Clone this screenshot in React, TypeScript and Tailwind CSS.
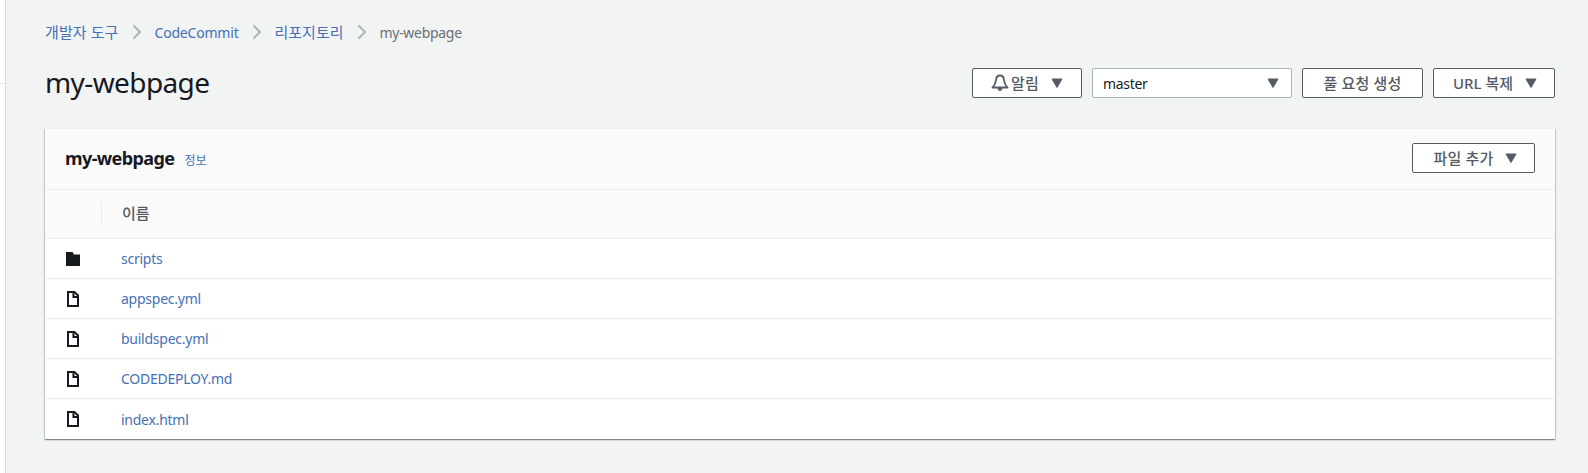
import type { ReactNode } from "react";

const font = "font-['Noto_Sans','Noto_Sans_CJK_KR',sans-serif]";

const files = [
  { name: "scripts", folder: true },
  { name: "appspec.yml", folder: false },
  { name: "buildspec.yml", folder: false },
  { name: "CODEDEPLOY.md", folder: false },
  { name: "index.html", folder: false },
];

function Caret() {
  return (
    <svg width="12" height="10" viewBox="0 0 12 10" className="shrink-0">
      <path d="M1 1h10L6 9.5z" fill="#545b64" stroke="#545b64" strokeLinejoin="round" />
    </svg>
  );
}

function BellIcon() {
  return (
    <svg width="18" height="18" viewBox="0 0 18 18" fill="none" className="shrink-0">
      <path
        d="M9 1.500c-2.500 0-3.800 2-4 4.500-.2 3-1.200 5-3.500 7.500h15c-2.300-2.500-3.300-4.500-3.500-7.500-.2-2.500-1.500-4.500-4-4.500z"
        stroke="#545b64"
        strokeWidth="1.800"
        strokeLinejoin="round"
      />
      <path d="M7 14.500a2 2 0 0 0 4 0z" fill="#545b64" stroke="#545b64" />
    </svg>
  );
}

function Chevron() {
  return (
    <svg width="10" height="16" viewBox="0 0 10 16" fill="none" className="mx-[13px] shrink-0">
      <path d="M1.500 1.500L8 8l-6.500 6.500" stroke="#aab7b8" strokeWidth="2" />
    </svg>
  );
}

function FolderIcon() {
  return (
    <svg width="16" height="16" viewBox="0 0 16 16">
      <path d="M1 1h6.500L9 3.500h6V15H1z" fill="#16191f" />
    </svg>
  );
}

function FileIcon() {
  return (
    <svg width="16" height="16" viewBox="0 0 16 16" fill="none">
      <path d="M3 1h6.500L13 4.500V15H3z" stroke="#16191f" strokeWidth="2" />
      <path d="M8.500 1v5H13" stroke="#16191f" strokeWidth="2" />
    </svg>
  );
}

function ActionButton({ children, className }: { children: ReactNode; className: string }) {
  return (
    <button
      className={`h-[30px] flex items-center justify-center rounded-[2px] border border-[#545b64] bg-white text-[15px] font-medium tracking-[0.2px] text-[#545b64] ${className}`}
    >
      {children}
    </button>
  );
}

function Crumb({ label, className }: { label: string; className: string }) {
  return (
    <>
      <a className={`text-[#4570b5] ${className}`}>{label}</a>
      <Chevron />
    </>
  );
}

export default function App() {
  return (
    <div className={`flex h-[473px] w-[1588px] overflow-hidden bg-[#f2f3f3] ${font}`}>
      <div className="w-[6px] shrink-0 border-r border-[#d5dbdb] bg-white">
        <div className="mt-[83px] border-t border-[#eaeded]" />
      </div>
      <main className="flex-1 pl-[39px] pr-[33px]">
        <nav className="mt-[20px] flex h-[24px] items-center text-[#687078]">
          <Crumb label="개발자 도구" className="text-[15px] tracking-[0.1px]" />
          <Crumb label="CodeCommit" className="text-[14px] tracking-[-0.2px]" />
          <Crumb label="리포지토리" className="text-[15px]" />
          <span className="text-[14px] tracking-[-0.3px]">my-webpage</span>
        </nav>

        <div className="mt-[24px] flex h-[30px] items-center justify-between">
          <h1 className="-mt-[3px] text-[28px] leading-[30px] tracking-[-0.6px] text-[#16191f]">my-webpage</h1>
          <div className="flex gap-[10px]">
            <ActionButton className="w-[110px] gap-[12px]">
              <span className="flex items-center gap-[2px]">
                <BellIcon />
                알림
              </span>
              <Caret />
            </ActionButton>
            <div className="flex h-[30px] w-[200px] items-center justify-between rounded-[2px] border border-[#aab7b8] bg-white pl-[10px] pr-[12px] text-[14px] tracking-[-0.3px] text-[#16191f]">
              master
              <Caret />
            </div>
            <ActionButton className="w-[121px]">풀 요청 생성</ActionButton>
            <ActionButton className="w-[122px] gap-[12px] pl-[2px] tracking-[0px]">
              URL 복제
              <Caret />
            </ActionButton>
          </div>
        </div>

        <section className="mt-[30px] border-t border-[#eaeded] bg-white shadow-[0_1px_1px_0_rgba(0,28,36,0.3),1px_1px_1px_0_rgba(0,28,36,0.15),-1px_1px_1px_0_rgba(0,28,36,0.15)]">
          <header className="flex h-[61px] items-center justify-between border-b border-[#eaeded] bg-[#fafafa] pb-[2px] pl-[20px] pr-[20px]">
            <div className="flex items-baseline gap-[10px]">
              <h2 className="text-[18px] font-bold tracking-[-0.6px] text-[#16191f]">my-webpage</h2>
              <a className="text-[12px] text-[#4570b5]">정보</a>
            </div>
            <ActionButton className="w-[123px] gap-[11px] pl-[3px]">
              파일 추가
              <Caret />
            </ActionButton>
          </header>
          <div className="flex h-[49px] items-center border-b border-[#eaeded] bg-[#fafafa] pb-[1px]">
            <div className="h-[24px] w-[57px] border-r border-[#eaeded]" />
            <span className="ml-[20px] text-[15px] font-medium text-[#545b64]">이름</span>
          </div>
          <ul>
            {files.map((file) => (
              <li key={file.name} className="flex h-[40px] items-center border-b border-[#eaeded] last:border-b-0">
                <div className="w-[76px] pl-[20px]">
                  {file.folder ? <FolderIcon /> : <FileIcon />}
                </div>
                <a className="text-[14px] tracking-[-0.25px] text-[#4570b5]">{file.name}</a>
              </li>
            ))}
          </ul>
        </section>
      </main>
    </div>
  );
}
